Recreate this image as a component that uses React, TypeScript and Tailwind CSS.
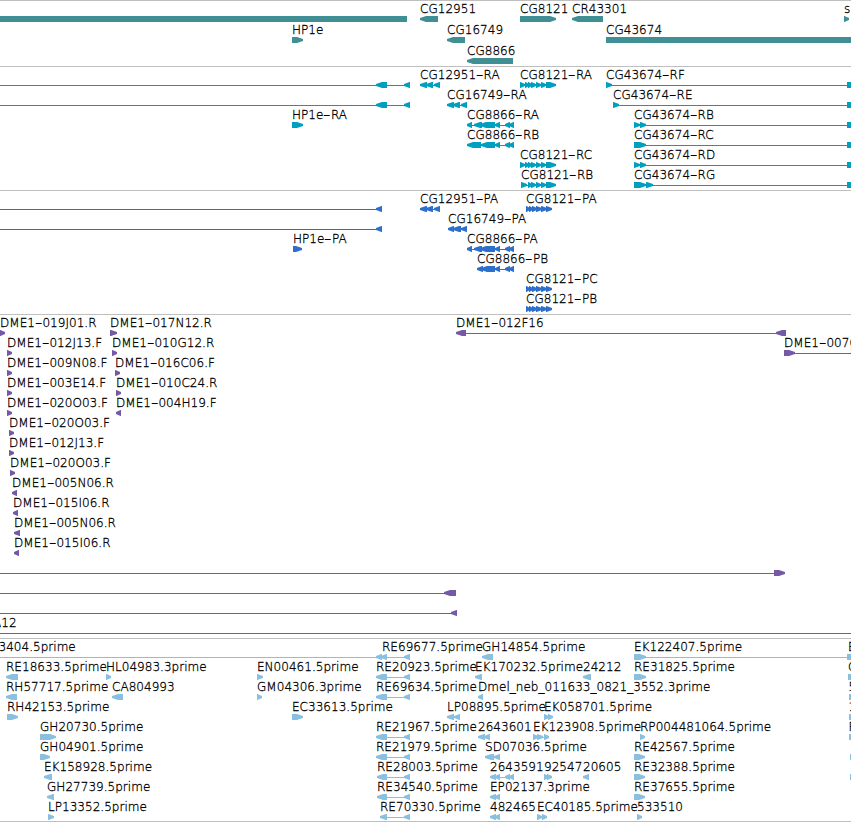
import type { ReactNode } from "react";

type Dir = "<" | ">" | "=";
type Exon = [number, number, Dir?];

interface Feature {
  row: number;
  label?: string;
  x?: number;
  dir: Dir;
  exons: Exon[];
  // extent of the thin connecting line, when it differs from the exons
  line?: [number, number];
}

interface Track {
  name: string;
  color: string;
  height: number;
  rowHeight: number;
  features: Feature[];
}

const f = (
  row: number,
  label: string,
  x: number,
  dir: Dir,
  exons: Exon[],
  line?: [number, number],
): Feature => ({ row, label, x, dir, exons, line });

const CG12951: Exon[] = [[420, 427], [426, 433], [434, 440]];
const CG16749: Exon[] = [[447, 454], [453, 460], [461, 467]];
const CG8866_TAIL: Exon[] = [[495, 500], [505, 510], [509, 514]];
const CG8866_A: Exon[] = [[467, 472], [474, 482], [480, 495], ...CG8866_TAIL];
const CG8866_B: Exon[] = [[467, 481], [481, 495], ...CG8866_TAIL];
const CG8121_TAIL: Exon[] = [[528, 532], [531, 536], [536, 541], [541, 546], [546, 556]];
const CG8121_R: Exon[] = [[520, 525], [525, 529], ...CG8121_TAIL];
const CG8121_P: Exon[] = [[526, 530], [529, 533], [532, 537], [536, 542], [541, 547], [546, 552]];
const EDGE: Exon = [847, 851, "="];

const tracks: Track[] = [
  {
    name: "genes",
    color: "#408f94",
    height: 66,
    rowHeight: 21,
    features: [
      f(0, "", 0, "=", [[0, 407]]),
      f(0, "CG12951", 420, "<", [[420, 438]]),
      f(0, "CG8121", 520, ">", [[520, 556]]),
      f(0, "CR43301", 572, "<", [[572, 603]]),
      f(0, "s", 844, ">", [[844, 849]]),
      f(1, "HP1e", 292, ">", [[292, 303]]),
      f(1, "CG16749", 447, "<", [[447, 465]]),
      f(1, "CG43674", 606, "=", [[606, 851]]),
      f(2, "CG8866", 467, "<", [[467, 513]]),
    ],
  },
  {
    name: "transcripts",
    color: "#009fbf",
    height: 124,
    rowHeight: 20,
    features: [
      f(0, "", 0, "<", [[376, 387], [404, 410]], [0, 410]),
      f(0, "CG12951-RA", 420, "<", CG12951),
      f(0, "CG8121-RA", 520, ">", CG8121_R),
      f(0, "CG43674-RF", 606, ">", [[606, 612], EDGE]),
      f(1, "", 0, "<", [[376, 387], [404, 410]], [0, 410]),
      f(1, "CG16749-RA", 447, "<", CG16749),
      f(1, "CG43674-RE", 613, ">", [[613, 619], EDGE]),
      f(2, "HP1e-RA", 292, ">", [[292, 303]]),
      f(2, "CG8866-RA", 467, "<", CG8866_A),
      f(2, "CG43674-RB", 634, ">", [[634, 640], [640, 646], EDGE]),
      f(3, "CG8866-RB", 467, "<", CG8866_B),
      f(3, "CG43674-RC", 634, ">", [[634, 646], EDGE]),
      f(4, "CG8121-RC", 520, ">", CG8121_R),
      f(4, "CG43674-RD", 634, ">", [[634, 640], [640, 646], EDGE]),
      f(5, "CG8121-RB", 521, ">", [[521, 527], ...CG8121_TAIL]),
      f(5, "CG43674-RG", 634, ">", [[634, 646], [646, 653], EDGE]),
    ],
  },
  {
    name: "proteins",
    color: "#2f6fcc",
    height: 124,
    rowHeight: 20,
    features: [
      f(0, "", 0, "<", [[376, 382]], [0, 382]),
      f(0, "CG12951-PA", 420, "<", CG12951),
      f(0, "CG8121-PA", 526, ">", CG8121_P),
      f(1, "", 0, "<", [[376, 382]], [0, 382]),
      f(1, "CG16749-PA", 448, "<", [[448, 454], [453, 461], [461, 467]]),
      f(2, "HP1e-PA", 293, ">", [[293, 302]]),
      f(2, "CG8866-PA", 467, "<", CG8866_A),
      f(3, "CG8866-PB", 477, "<", [[477, 483], [481, 495], ...CG8866_TAIL]),
      f(4, "CG8121-PC", 526, ">", CG8121_P),
      f(5, "CG8121-PB", 526, ">", CG8121_P),
    ],
  },
  {
    name: "bac ends",
    color: "#7459a7",
    height: 324,
    rowHeight: 20,
    features: [
      f(0, "DME1-019J01.R", 0, ">", [[0, 5]]),
      f(0, "DME1-017N12.R", 110, ">", [[110, 117]]),
      f(0, "DME1-012F16", 456, "<", [[456, 466], [776, 786]]),
      f(1, "DME1-012J13.F", 7, ">", [[7, 12]]),
      f(1, "DME1-010G12.R", 112, ">", [[112, 117]]),
      f(1, "DME1-007O", 784, ">", [[784, 795]], [784, 851]),
      f(2, "DME1-009N08.F", 7, ">", [[7, 12]]),
      f(2, "DME1-016C06.F", 115, ">", [[115, 120]]),
      f(3, "DME1-003E14.F", 7, ">", [[7, 12]]),
      f(3, "DME1-010C24.R", 116, ">", [[116, 121]]),
      f(4, "DME1-020O03.F", 7, ">", [[7, 12]]),
      f(4, "DME1-004H19.F", 116, "<", [[116, 121]]),
      f(5, "DME1-020O03.F", 9, ">", [[9, 14]]),
      f(6, "DME1-012J13.F", 9, ">", [[9, 14]]),
      f(7, "DME1-020O03.F", 10, ">", [[10, 15]]),
      f(8, "DME1-005N06.R", 12, "<", [[12, 17]]),
      f(9, "DME1-015I06.R", 13, "<", [[13, 18]]),
      f(10, "DME1-005N06.R", 14, "<", [[14, 20]]),
      f(11, "DME1-015I06.R", 14, "<", [[14, 19]]),
      f(12, "", 0, ">", [[774, 785]], [0, 785]),
      f(13, "", 0, "<", [[444, 456]], [0, 456]),
      f(14, "", 0, "<", [[451, 457]], [0, 457]),
      f(15, "A12", -7, "=", [], [0, 851]),
    ],
  },
  {
    name: "ests",
    color: "#89bfdf",
    height: 183,
    rowHeight: 20,
    features: [
      f(0, "3404.5prime", -1.5, "<", [[376, 382], [381, 387], [404, 410]], [0, 410]),
      f(0, "RE69677.5prime", 382, "<", []),
      f(0, "GH14854.5prime", 482, "<", [[482, 493]]),
      f(0, "EK122407.5prime", 634, ">", [[634, 646], EDGE]),
      f(0, "E", 848, "=", []),
      f(1, "RE18633.5prime", 6, "<", [[6, 18]]),
      f(1, "HL04983.3prime", 106, ">", [[106, 111]]),
      f(1, "EN00461.5prime", 257, ">", [[257, 263]]),
      f(1, "RE20923.5prime", 376, "<", [[376, 387], [404, 410]]),
      f(1, "EK170232.5prime", 475, "<", [[475, 482]]),
      f(1, "24212", 583, "<", [[583, 591]]),
      f(1, "RE31825.5prime", 634, ">", [[634, 646]]),
      f(1, "G", 848, "=", [[848, 851]]),
      f(2, "RH57717.5prime", 6, "<", [[6, 17]]),
      f(2, "CA804993", 112, "<", [[112, 123]]),
      f(2, "GM04306.3prime", 257, ">", [[257, 262]]),
      f(2, "RE69634.5prime", 376, "<", [[376, 387], [404, 410]]),
      f(2, "Dmel_neb_011633_0821_3552.3prime", 478, "<", [[478, 483]]),
      f(2, "5", 848.5, ">", [[849, 856]]),
      f(3, "RH42153.5prime", 7, ">", [[7, 18]]),
      f(3, "EC33613.5prime", 292, ">", [[292, 303]]),
      f(3, "LP08895.5prime", 447, "<", [[447, 454], [454, 460]]),
      f(3, "EK058701.5prime", 544, ">", [[544, 549], [548, 553]]),
      f(3, "1", 848.5, ">", [[849, 856]]),
      f(4, "GH20730.5prime", 40, ">", [[40, 56]]),
      f(4, "RE21967.5prime", 376, "<", [[376, 387], [404, 410]]),
      f(4, "2643601", 478, "<", [[478, 485], [484, 490]]),
      f(4, "EK123908.5prime", 533, ">", [[533, 538], [537, 543], [544, 549]]),
      f(4, "RP004481064.5prime", 640, ">", [[640, 645]]),
      f(4, "R", 848.5, ">", [[849, 856]]),
      f(5, "GH04901.5prime", 40, ">", [[40, 50]]),
      f(5, "RE21979.5prime", 376, "<", [[376, 387], [404, 410]]),
      f(5, "SD07036.5prime", 485, "<", [[485, 494], [494, 500]]),
      f(5, "RE42567.5prime", 634, ">", [[634, 645]]),
      f(5, "", 850, "=", [[850, 851]]),
      f(6, "EK158928.5prime", 44, "<", [[44, 52]]),
      f(6, "RE28003.5prime", 377, "<", [[377, 387], [404, 410]]),
      f(6, "2643591", 490, "<", [[490, 496], [495, 500], [505, 510], [509, 514]]),
      f(6, "92547", 544, ">", [[544, 549], [547, 552]]),
      f(6, "20605", 583, "<", [[583, 589]]),
      f(6, "RE32388.5prime", 634, ">", [[634, 645]]),
      f(6, "", 850, "=", [[850, 851]]),
      f(7, "GH27739.5prime", 47, "<", [[47, 54]]),
      f(7, "RE34540.5prime", 377, "<", [[377, 387], [404, 410]]),
      f(7, "EP02137.3prime", 490, "<", [[490, 496], [495, 500]]),
      f(7, "RE37655.5prime", 634, ">", [[634, 645]]),
      f(8, "LP13352.5prime", 48, ">", [[48, 54]]),
      f(8, "RE70330.5prime", 380, "<", [[380, 387], [404, 410]]),
      f(8, "482465", 490, "<", [[490, 496], [495, 500]]),
      f(8, "EC40185.5prime", 537, ">", [[537, 542], [542, 547]]),
      f(8, "533510", 637, ">", [[637, 642]]),
    ],
  },
];

function exonPoints([a, b, own]: Exon, featureDir: Dir, top: number) {
  const dir = own ?? featureDir;
  const bottom = top + 6;
  const head = Math.min(6, b - a - 0.5);
  if (dir === "=") return `${a},${top} ${b},${top} ${b},${bottom} ${a},${bottom}`;
  if (dir === ">") {
    return `${a},${top} ${b - head},${top} ${b},${top + 2} ${b},${top + 4} ${b - head},${bottom} ${a},${bottom}`;
  }
  return `${b},${top} ${a + head},${top} ${a},${top + 2} ${a},${top + 4} ${a + head},${bottom} ${b},${bottom}`;
}

function FeatureGlyph({ feature, top }: { feature: Feature; top: number }) {
  const { exons, dir } = feature;
  const span =
    feature.line ?? (exons.length > 1 ? [exons[0][0], exons[exons.length - 1][1]] : undefined);
  return (
    <g>
      {span && <rect x={span[0]} y={top + 3} width={span[1] - span[0]} height={1} />}
      {exons.map((e, i) => (
        <polygon key={i} points={exonPoints(e, dir, top)} />
      ))}
    </g>
  );
}

function Label({ text, x, y }: { text: string; x: number; y: number }) {
  const [head, tail] = text.split("-");
  let content: ReactNode = text;
  if (tail !== undefined) {
    content = (
      <>
        {head}
        <span className="inline-block w-[7.5px] origin-left scale-x-[1.7]">-</span>
        {tail}
      </>
    );
  }
  return (
    <span className="absolute whitespace-nowrap leading-[14px]" style={{ left: x, top: y }}>
      {content}
    </span>
  );
}

function TrackView({ track }: { track: Track }) {
  return (
    <section
      aria-label={track.name}
      className="relative shrink-0 overflow-hidden border-t border-[#bfbfbf]"
      style={{ height: track.height }}
    >
      <svg className="block w-full" height={track.height - 1} fill={track.color}>
        {track.features.map((feature, i) => (
          <FeatureGlyph key={i} feature={feature} top={feature.row * track.rowHeight + 15} />
        ))}
      </svg>
      {track.features.map(
        (feature, i) =>
          feature.label && (
            <Label
              key={i}
              text={feature.label}
              x={feature.x ?? 0}
              y={feature.row * track.rowHeight + 1}
            />
          ),
      )}
    </section>
  );
}

export default function App() {
  return (
    <main className="flex h-[822px] w-[851px] flex-col overflow-hidden border-b border-[#bfbfbf] bg-white font-['DejaVu_Sans',sans-serif] text-[12px] font-extralight tracking-[0.03px] text-black [-webkit-text-stroke:0.3px_black]">
      {tracks.map((track) => (
        <TrackView key={track.name} track={track} />
      ))}
    </main>
  );
}
